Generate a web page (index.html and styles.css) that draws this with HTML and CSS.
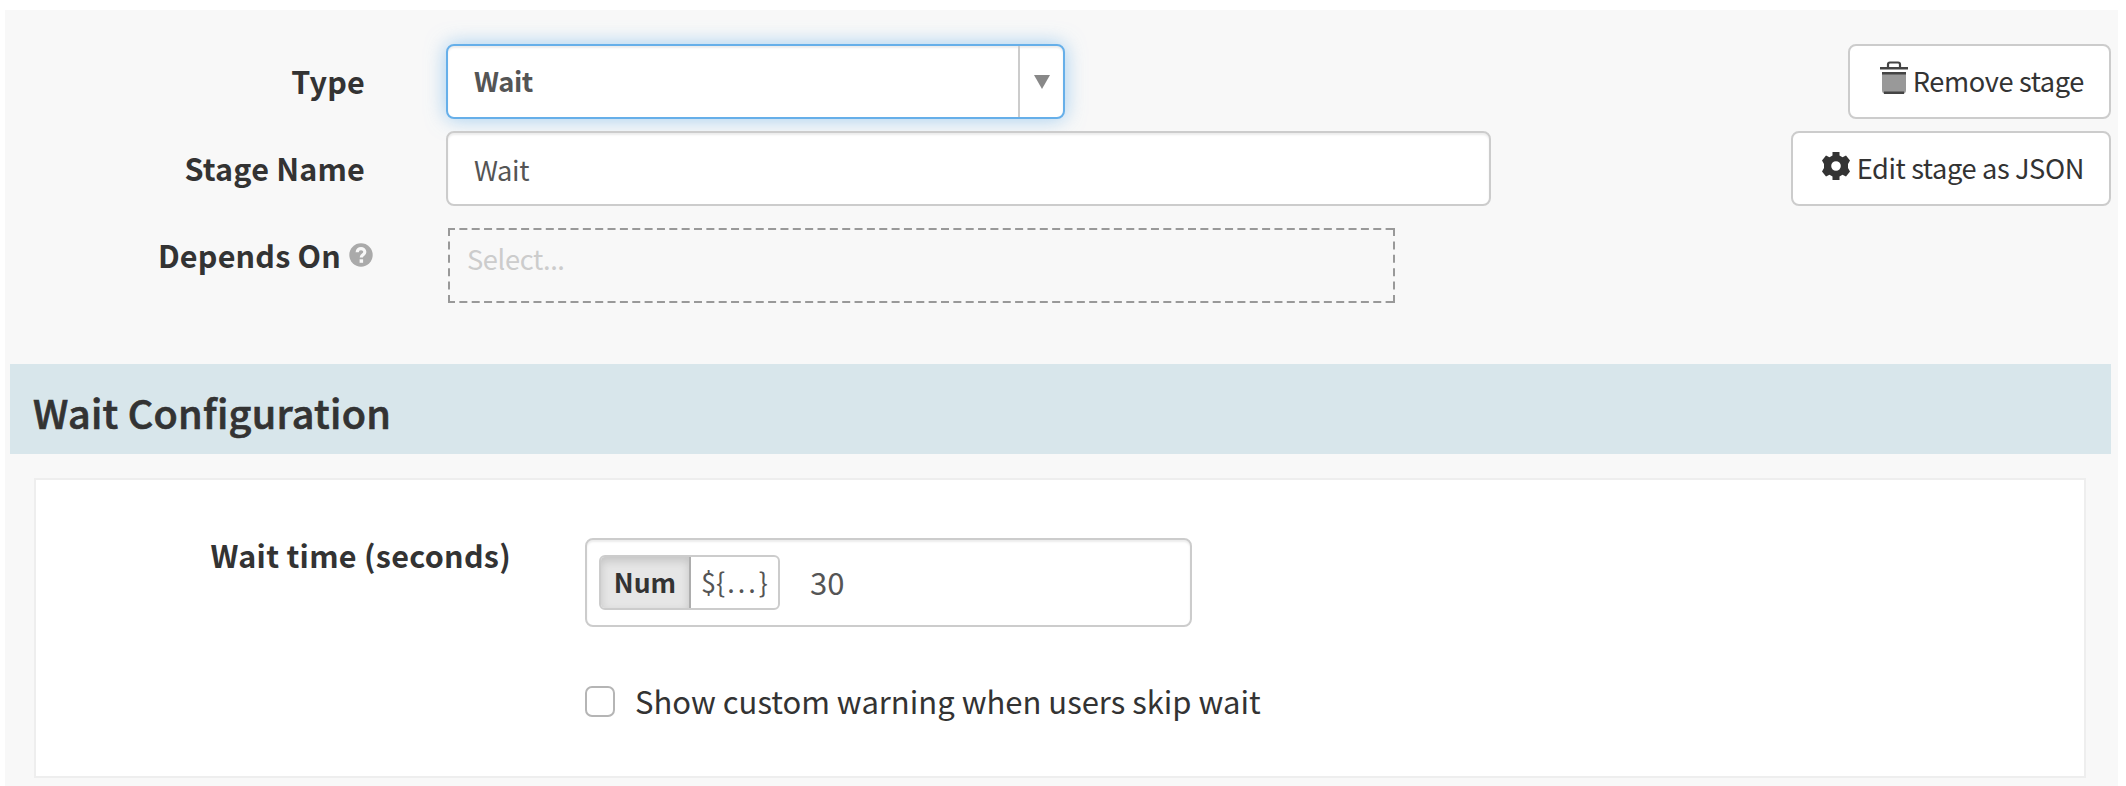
FILE: index.html
```html
<!DOCTYPE html>
<html lang="en">
<head>
<meta charset="utf-8">
<title>Wait stage</title>
<link rel="stylesheet" href="styles.css">
</head>
<body>
<main class="panel">
  <section class="stage">
    <div class="fields">
      <div class="row">
        <label class="label">Type</label>
        <div class="select focused"><span class="select-value">Wait</span><span class="select-arrow"><svg width="16" height="14" viewBox="0 0 16 14"><path d="M0 0h16L8 14z" fill="#888"/></svg></span></div>
      </div>
      <div class="row">
        <label class="label">Stage Name</label>
        <div class="input">Wait</div>
      </div>
      <div class="row depends">
        <label class="label label-help">Depends On<svg class="help" width="24" height="24" viewBox="0 0 24 24"><circle cx="12" cy="12" r="11.7" fill="#aaa"/><path d="M8.200 9.300c0-5 7.600-4.800 7.600-.4 0 2.900-3.500 2.700-3.500 5.500" fill="none" stroke="#f8f8f8" stroke-width="3.200"/><rect x="10.600" y="16.300" width="3.500" height="3.500" fill="#f8f8f8"/></svg></label>
        <div class="dashed"><svg class="dashes" width="947" height="75"><path d="M0 1H947M0 74H947" stroke-dasharray="8 4.350" stroke-dashoffset="1"/><path d="M1 0V75M946 0V75" stroke-dasharray="8 5.400"/></svg><span class="placeholder">Select...</span></div>
      </div>
    </div>
    <div class="actions">
      <button class="btn"><svg class="trash" width="28" height="34" viewBox="0 0 28 34"><path d="M8 6V3.500Q8 1.500 10 1.500h8q2 0 2 2V6" fill="none" stroke="#444" stroke-width="2.200"/><path d="M0 6h28v2.500H0z" fill="#444"/><path d="M2 11h24v18q0 4-4 4H6q-4 0-4-4z" fill="#999"/><path d="M2 11h24v2.500H2zM4 30.500h20v2.500H4z" fill="#444"/></svg>Remove stage</button>
      <button class="btn edit"><svg class="gear" width="28" height="28" viewBox="0 0 28 28"><path fill-rule="evenodd" fill="#333" d="M10.500 0h7v3.500l3 1.700 3.500-1.700 4 5L26 12v4l2 3.500-4 5-3.500-1.700-3 1.700V28h-7v-3.500l-3-1.700L4 24.500l-4-5L2 16v-4L0 8.500l4-5 3.500 1.700 3-1.700zM14 9.200a4.800 4.800 0 1 0 0 9.600a4.800 4.800 0 0 0 0-9.600z"/></svg>Edit stage as JSON</button>
    </div>
  </section>
  <h2 class="heading">Wait Configuration</h2>
  <section class="card">
    <label class="wait-label">Wait time (seconds)</label>
    <div class="wait-fields">
      <div class="number">
        <div class="toggle"><span class="mode active">Num</span><span class="mode expr">${<span class="ellipsis">...</span>}</span></div>
        <span class="number-value">30</span>
      </div>
      <div class="check"><span class="box"></span><span class="check-text">Show custom warning when users skip wait</span></div>
    </div>
  </section>
</main>
</body>
</html>
```

FILE: styles.css
```css
* { box-sizing: border-box; }
body {
  margin: 0;
  height: 786px;
  overflow: hidden;
  background: #fff;
  padding: 10px 8px 0 5px;
  font-family: "Noto Sans CJK SC", "Noto Sans", sans-serif;
  color: #333;
}
.panel { height: 776px; background: #f8f8f8; padding: 34px 7px 0 5px; }
.stage { display: flex; justify-content: space-between; height: 320px; }
.fields { display: flex; flex-direction: column; gap: 12px; }
.row { display: flex; height: 75px; }
.label {
  width: 355px;
  margin-right: 81px;
  text-align: right;
  font-weight: 700;
  font-size: 30.5px;
  letter-spacing: .2px;
  line-height: 74px;
  white-space: nowrap;
}
.depends { margin-top: 10px; }
.label-help { width: 363px; margin-right: 75px; line-height: 54px; display: flex; justify-content: flex-end; }
.help { margin: 15px 0 0 8px; }
.select, .input {
  width: 619px;
  border: 2px solid #ccc;
  border-radius: 8px;
  background: #fff;
  font-size: 27.3px;
  line-height: 72px;
  color: #555;
  box-shadow: inset 0 2px 2px rgba(0,0,0,.075);
}
.select { display: flex; font-weight: 700; line-height: 69px; }
.select-value { flex: 1; padding-left: 26px; letter-spacing: -.4px; }
.focused { border-color: #66afe9; box-shadow: inset 0 2px 2px rgba(0,0,0,.075), 0 0 20px rgba(102,175,233,.6); }
.select-arrow { width: 45px; border-left: 2px solid #ccc; display: flex; justify-content: center; padding-top: 29px; }
.input { width: 1045px; padding-left: 26px; letter-spacing: -.4px; }
.dashed { width: 947px; height: 75px; position: relative; }
.dashes { position: absolute; left: 0; top: 0; fill: none; stroke: #999; stroke-width: 2; }
.placeholder { display: block; padding-left: 19px; font-size: 27.3px; letter-spacing: -.4px; line-height: 61px; color: #ccc; }
.actions { display: flex; flex-direction: column; align-items: flex-end; gap: 12px; }
.btn {
  height: 75px;
  width: 263px;
  border: 2px solid #ccc;
  border-radius: 8px;
  background: #fff;
  color: #333;
  font: 400 27.2px/69px "Noto Sans CJK SC", "Noto Sans", sans-serif;
  letter-spacing: -.38px;
  padding: 0 25px 0 0;
  display: flex;
  justify-content: flex-end;
  white-space: nowrap;
}
.edit { width: 320px; }
.trash { margin: 15px 5px 0 0; }
.gear { margin: 19px 7px 0 0; }
.heading {
  margin: 0;
  height: 90px;
  padding-left: 23px;
  background: #d8e6eb;
  font-size: 39.5px;
  font-weight: 500;
  letter-spacing: .28px;
  line-height: 95px;
  -webkit-text-stroke: .7px #333;
}
.card {
  margin: 24px 25px 0 24px;
  height: 300px;
  border: 2px solid #eee;
  background: #fff;
  display: flex;
}
.wait-label { width: 475px; margin-right: 74px; padding-top: 50px; text-align: right; font-size: 30.5px; font-weight: 700; letter-spacing: .28px; line-height: 50px; }
.wait-fields { padding-top: 58px; }
.number {
  width: 607px;
  height: 89px;
  border: 2px solid #ccc;
  border-radius: 8px;
  box-shadow: inset 0 2px 2px rgba(0,0,0,.075);
  display: flex;
  align-items: center;
  padding-left: 12px;
}
.toggle { display: flex; width: 181px; height: 55px; border: 2px solid #ccc; border-radius: 6px; overflow: hidden; }
.mode { font-size: 27px; line-height: 49px; text-align: center; flex: 1; }
.active { flex: 0 0 90px; font-size: 26.5px; font-weight: 700; background: #e6e6e6; border-right: 2px solid #adadad; box-shadow: inset 0 4px 10px rgba(0,0,0,.15); }
.expr { color: #555; }
.ellipsis { letter-spacing: 3px; margin-left: 2px; }
.number-value { font-size: 31px; line-height: 60px; margin: -2px 0 0 30px; color: #555; }
.check { display: flex; margin-top: 59px; height: 31px; }
.box { width: 30px; height: 31px; border: 2px solid #b5b5b5; border-radius: 7px; }
.check-text { margin-left: 20px; font-size: 31px; line-height: 30px; white-space: nowrap; }
```
